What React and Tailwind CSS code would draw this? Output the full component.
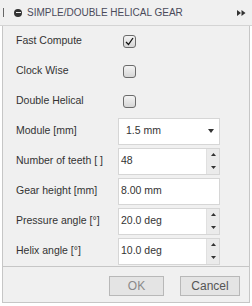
const Check = ({ checked }) => (
  <span className="w-[13px] h-[13px] rounded-[3px] border border-[#6b6b6b] bg-gradient-to-b from-[#f4f4f4] to-[#d6d6d6] flex items-center justify-center">
    {checked && (
      <svg width="11" height="11" viewBox="0 0 11 11">
        <path d="M2 6 L4.5 8.5 L9 2" fill="none" stroke="#111" strokeWidth="1.3" />
      </svg>
    )}
  </span>
);

const Spinner = () => (
  <div className="w-[13px] flex flex-col bg-[#ebebeb] border-l border-[#e0e0e0]">
    <div className="flex-1 flex items-center justify-center">
      <svg width="5" height="3" viewBox="0 0 5 3"><path d="M0 3 L2.5 0 L5 3Z" fill="#333" /></svg>
    </div>
    <div className="flex-1 flex items-center justify-center">
      <svg width="5" height="3" viewBox="0 0 5 3"><path d="M0 0 L5 0 L2.5 3Z" fill="#333" /></svg>
    </div>
  </div>
);

const Field = ({ value, spin, select }) => (
  <div className="w-[102px] h-[27px] bg-white border border-[#d6d6d6] flex">
    <div className={`flex-1 flex items-center ${select ? 'pl-[7px]' : 'pl-[2px]'}`}>{value}</div>
    {spin && <Spinner />}
    {select && (
      <div className="w-[16px] flex items-center justify-center">
        <svg width="6" height="4" viewBox="0 0 6 4"><path d="M0 0 L6 0 L3 4Z" fill="#333" /></svg>
      </div>
    )}
  </div>
);

const Row = ({ label, children }) => (
  <div className="h-[30px] flex items-center">
    <div className="w-[115px] shrink-0 pl-[13px]">{label}</div>
    {children}
  </div>
);

export default function App() {
  return (
    <div className="w-[252px] h-[306px] bg-white text-[10.5px] text-[#333] font-['Liberation_Sans',Arial,sans-serif]">
      <div className="h-[26px] bg-[#f0f0f0] border-b border-[#d4d4d4] flex items-center">
        <div className="w-[1px] h-[9px] shrink-0 bg-[#666] ml-[3px]" />
        <div className="w-[8px] h-[8px] shrink-0 rounded-full bg-[#333] ml-[10px] flex items-center justify-center">
          <div className="w-[5px] h-[1.5px] bg-[#f0f0f0]" />
        </div>
        <div className="ml-[5px] text-[10px] text-[#4a4a5a] whitespace-nowrap">SIMPLE/DOUBLE HELICAL GEAR</div>
        <div className="ml-auto mr-[6px] flex">
          <svg width="9" height="6" viewBox="0 0 9 6"><path d="M0 0 L4 3 L0 6Z M4.5 0 L8.5 3 L4.5 6Z" fill="#333" /></svg>
        </div>
      </div>
      <div className="mx-[2px] bg-[#f0f0f0] border-x border-b border-[#c6c6c6] h-[277px] flex flex-col">
        <div className="h-[240px]">
          <Row label="Fast Compute"><div className="pl-[5px]"><Check checked /></div></Row>
          <Row label="Clock Wise"><div className="pl-[5px]"><Check /></div></Row>
          <Row label="Double Helical"><div className="pl-[5px]"><Check /></div></Row>
          <Row label="Module [mm]"><Field value="1.5 mm" select /></Row>
          <Row label="Number of teeth [ ]"><Field value="48" spin /></Row>
          <Row label="Gear height [mm]"><Field value="8.00 mm" /></Row>
          <Row label="Pressure angle [°]"><Field value="20.0 deg" spin /></Row>
          <Row label="Helix angle [°]"><Field value="10.0 deg" spin /></Row>
        </div>
        <div className="border-t border-[#c6c6c6] flex justify-end gap-[16px] pt-[9px] pr-[9px]">
          <button className="w-[55px] h-[20px] bg-[#e4e4e4] border border-[#b8b8b8] text-[12px] text-[#8a8a8a]">OK</button>
          <button className="w-[60px] h-[20px] bg-[#e4e4e4] border border-[#b8b8b8] text-[12px] text-[#555]">Cancel</button>
        </div>
      </div>
    </div>
  );
}
